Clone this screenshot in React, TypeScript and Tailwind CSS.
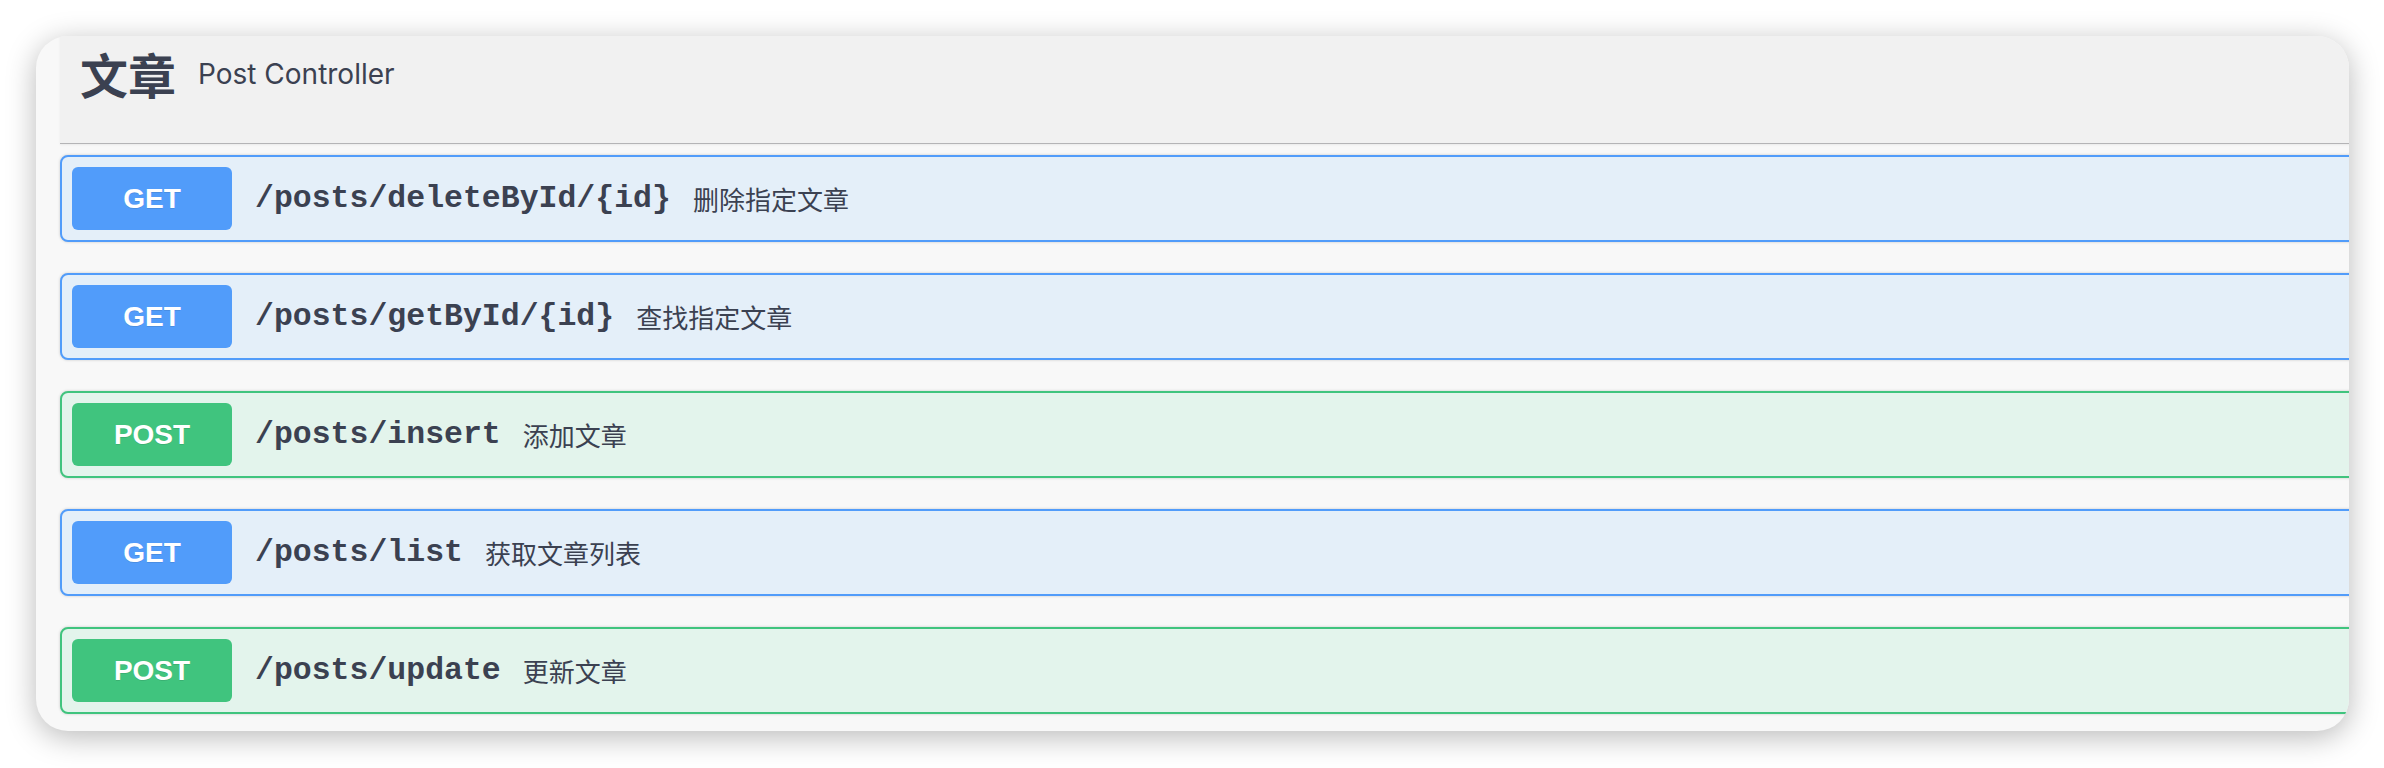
import React from 'react'

type Op = { method: 'GET' | 'POST'; path: string; summary: string }

const ops: Op[] = [
  { method: 'GET', path: '/posts/deleteById/{id}', summary: '删除指定文章' },
  { method: 'GET', path: '/posts/getById/{id}', summary: '查找指定文章' },
  { method: 'POST', path: '/posts/insert', summary: '添加文章' },
  { method: 'GET', path: '/posts/list', summary: '获取文章列表' },
  { method: 'POST', path: '/posts/update', summary: '更新文章' },
]

const OpBlock: React.FC<{ op: Op }> = ({ op }) => {
  const isGet = op.method === 'GET'
  return (
    <div
      className={`mb-[31px] flex items-center rounded-[8px] border-2 py-[10px] pl-[10px] shadow-[0_0_3px_rgba(0,0,0,0.19)] ${
        isGet ? 'border-[#519cfa] bg-[#e4eff9]' : 'border-[#40c47e] bg-[#e3f4ec]'
      }`}
    >
      <span
        className={`flex h-[63px] w-[160px] shrink-0 items-center justify-center rounded-[6px] font-['Liberation_Sans',Arial,sans-serif] text-[28px] font-bold text-white [text-shadow:0_1px_0_rgba(0,0,0,0.1)] ${
          isGet ? 'bg-[#519cfa]' : 'bg-[#40c47e]'
        }`}
      >
        {op.method}
      </span>
      <span className="ml-[23px] font-['Liberation_Mono','Courier_New',monospace] text-[31.5px] font-bold leading-none text-[#3b4151]">
        {op.path}
      </span>
      <span className="ml-[22px] font-['Noto_Sans_CJK_SC',sans-serif] text-[26px] leading-none text-[#3b4151]">
        {op.summary}
      </span>
    </div>
  )
}

const App: React.FC = () => {
  return (
    <div className="h-[768px] w-[2384px] bg-white pl-[36px] pt-[36px]">
      <div className="h-[695px] w-[2313px] overflow-hidden rounded-[32px] bg-[#f8f8f8] pl-[24px] shadow-[0_6px_30px_rgba(0,0,0,0.28)]">
        <div className="w-[2330px]">
          <div className="h-[108px] border-b border-[#b4b4b6] bg-[#f1f1f1] pl-[20px] pt-[9px] shadow-[0_1px_2px_rgba(0,0,0,0.06)]">
            <div className="flex items-center">
              <span className="font-['Noto_Sans_CJK_SC',sans-serif] text-[48px] font-bold leading-[1.2] text-[#3b4151]">
                文章
              </span>
              <span className="ml-[22px] font-['Inter','Liberation_Sans',sans-serif] text-[28px] leading-none text-[#3b4151]">
                Post Controller
              </span>
            </div>
          </div>
          <div className="pt-[11px]">
            {ops.map((op) => (
              <OpBlock key={op.path} op={op} />
            ))}
          </div>
        </div>
      </div>
    </div>
  )
}

export default App
